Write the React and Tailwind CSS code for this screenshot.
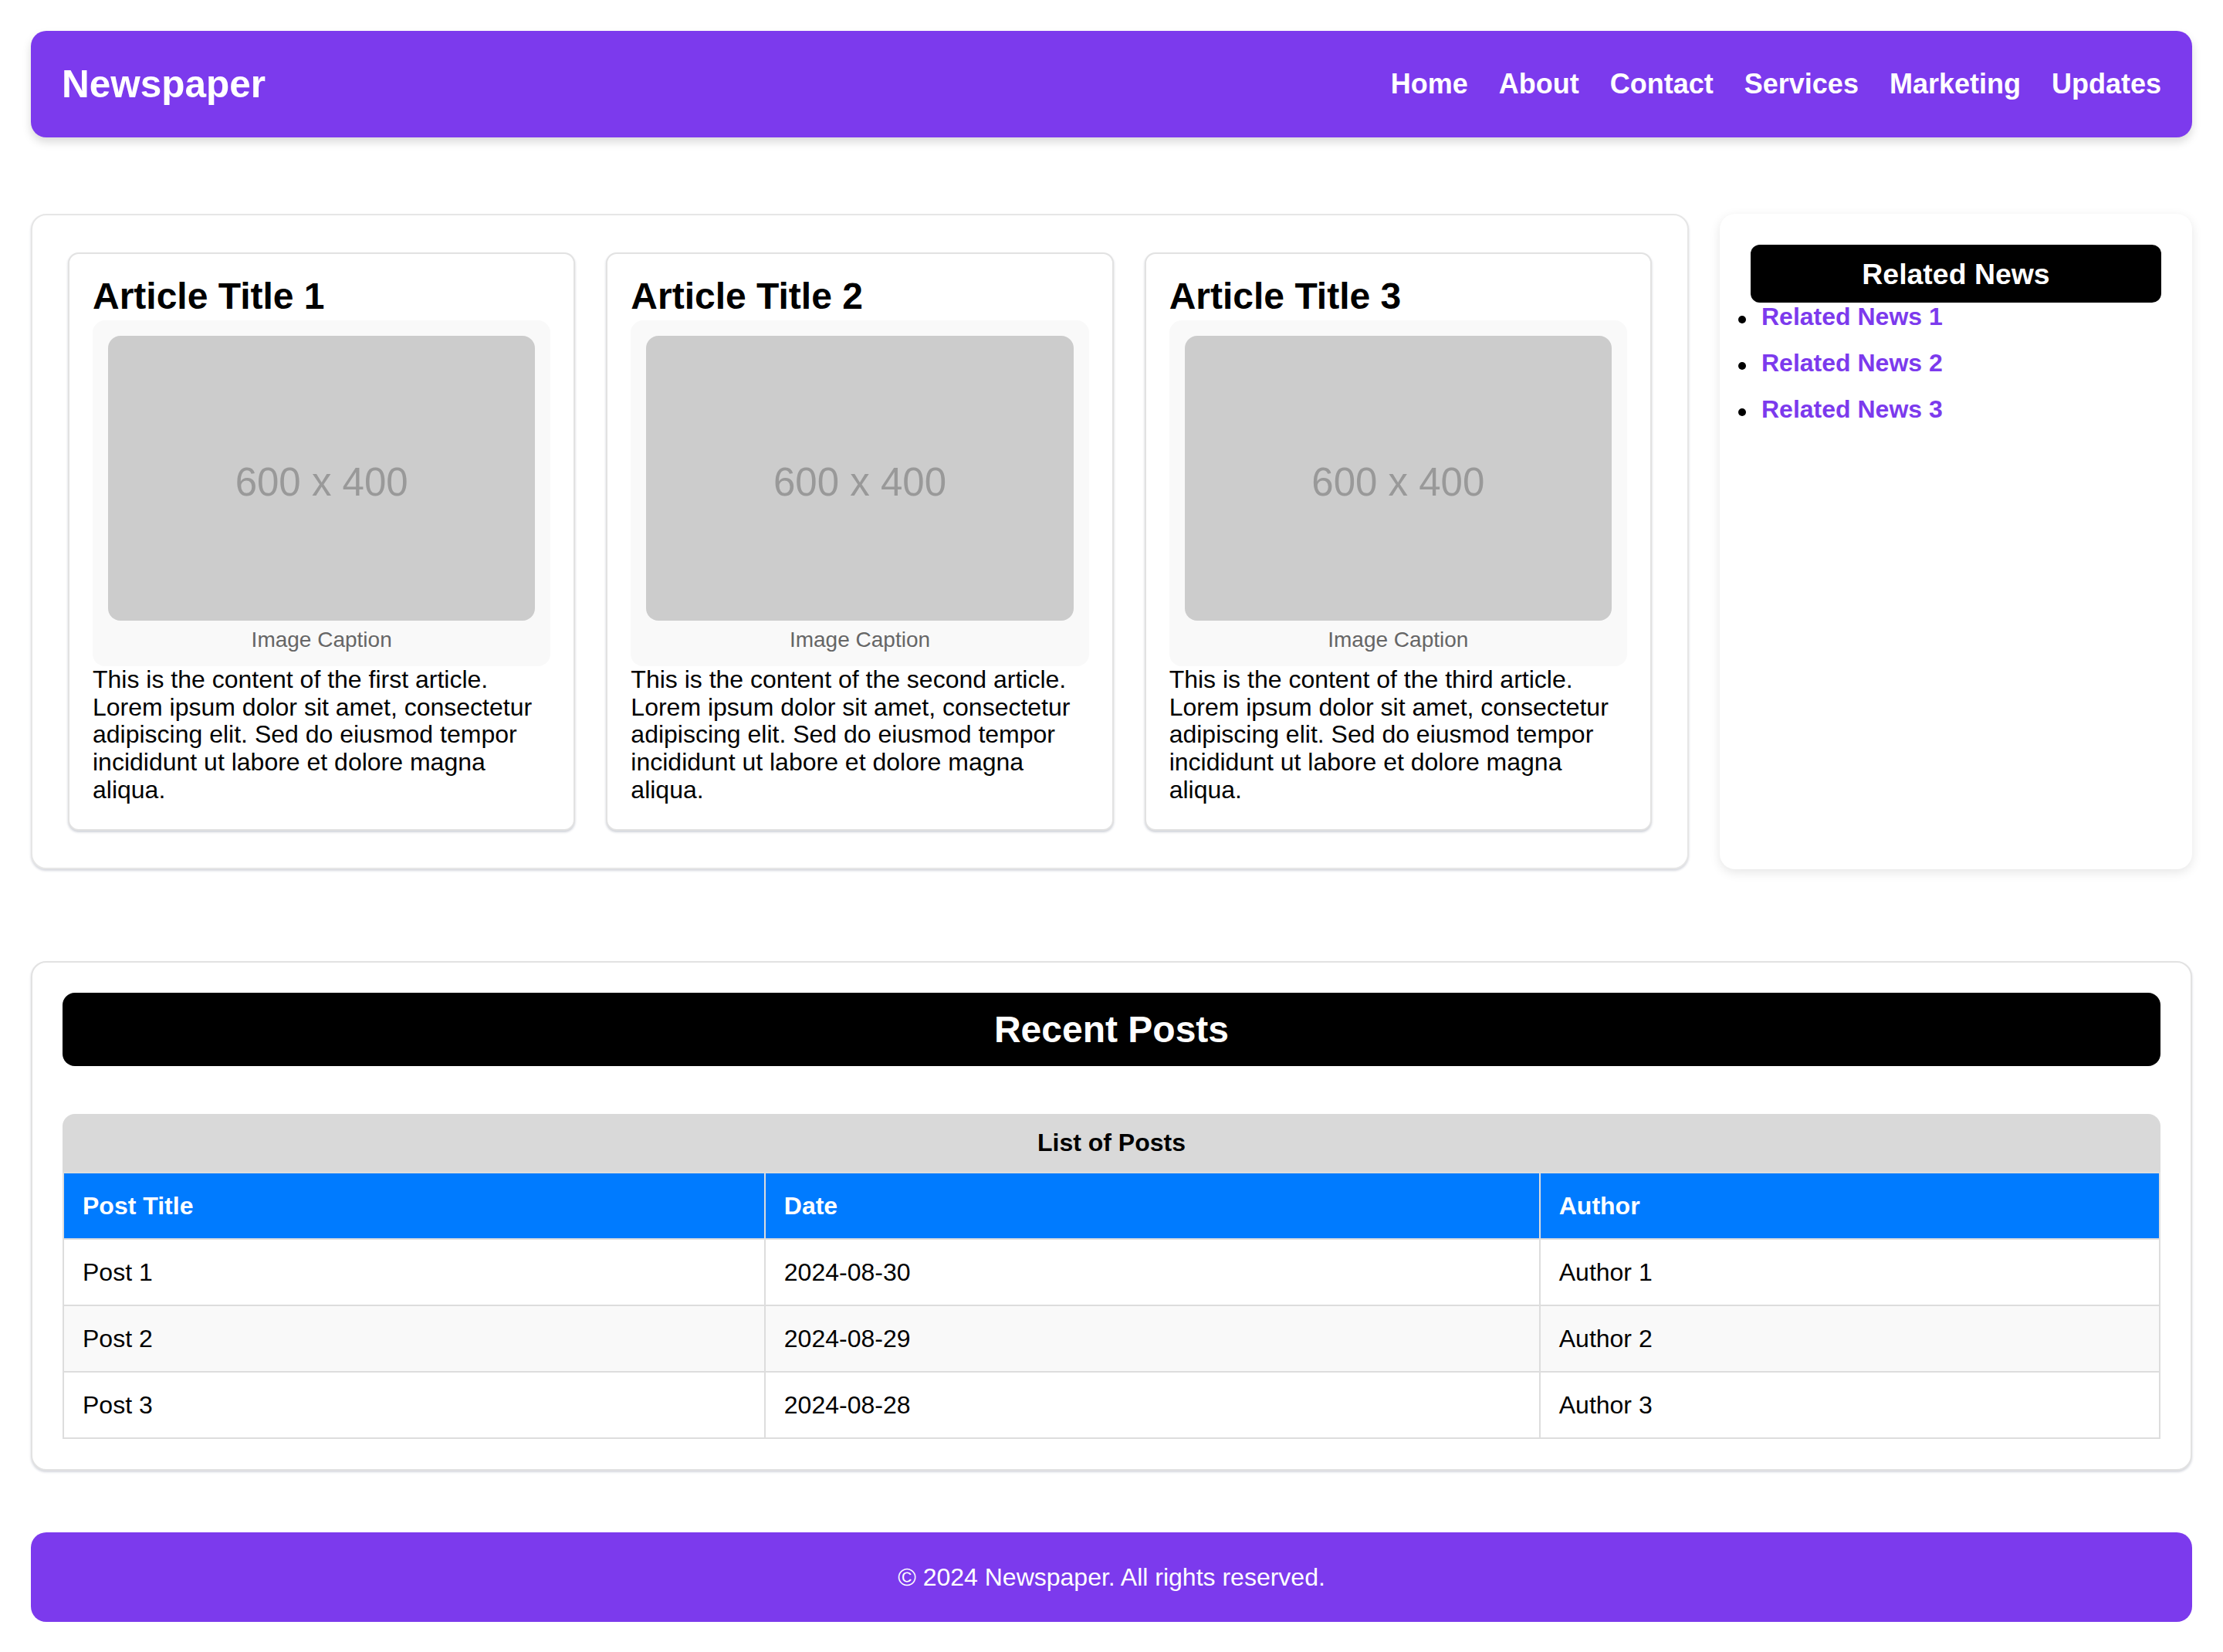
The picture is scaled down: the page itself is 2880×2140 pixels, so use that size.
import React from 'react';

const navLinks = ['Home', 'About', 'Contact', 'Services', 'Marketing', 'Updates'];

const articles = [
    { title: 'Article Title 1', which: 'first' },
    { title: 'Article Title 2', which: 'second' },
    { title: 'Article Title 3', which: 'third' },
];

const relatedNews = ['Related News 1', 'Related News 2', 'Related News 3'];

const posts = [
    { title: 'Post 1', date: '2024-08-30', author: 'Author 1' },
    { title: 'Post 2', date: '2024-08-29', author: 'Author 2' },
    { title: 'Post 3', date: '2024-08-28', author: 'Author 3' },
];

function ArticleCard({ title, which }) {
    return (
        <article className="rounded-[14px] border-2 border-[#e2e2e2] bg-white px-[30px] pt-[28px] pb-[32px] shadow-[0_2px_3px_rgba(60,70,100,0.25)]">
            <h2 className="mb-[4px] text-[48px] font-bold leading-[54px]">{title}</h2>
            <figure className="rounded-[16px] bg-[#f9f9f9] px-[20px] pt-[20px] pb-[18px]">
                <div className="flex aspect-[3/2] w-full items-center justify-center rounded-[16px] bg-[#cccccc] pt-[12px] text-[51px] text-[#999999]">
                    600 x 400
                </div>
                <figcaption className="mt-[9px] text-center text-[28px] leading-[32px] text-[#666666]">
                    Image Caption
                </figcaption>
            </figure>
            <p className="text-[32px] leading-[35.8px]">
                This is the content of the {which} article. Lorem ipsum dolor sit amet, consectetur adipiscing elit. Sed do eiusmod tempor incididunt ut labore et dolore magna aliqua.
            </p>
        </article>
    );
}

export default function App() {
    return (
        <div className="min-h-screen bg-white p-[40px] font-['Liberation_Sans',Arial,sans-serif] text-black">
            {/* Header */}
            <header className="flex items-center justify-between rounded-[20px] bg-[#7c3aed] px-[40px] py-[40px] text-white shadow-[0_6px_12px_rgba(0,0,0,0.15)]">
                <h1 className="text-[49.5px] font-bold leading-[58px]">Newspaper</h1>
                <nav>
                    <ul className="flex gap-[40px]">
                        {navLinks.map(link => (
                            <li key={link}>
                                <a href="#" className="text-[36px] font-bold leading-[40px] text-white">{link}</a>
                            </li>
                        ))}
                    </ul>
                </nav>
            </header>

            {/* Articles + sidebar */}
            <main className="mt-[99px] flex gap-[40px]">
                <section className="flex-1 rounded-[20px] border-2 border-[#e6e6e6] bg-white px-[46px] py-[48px] shadow-[0_2px_3px_rgba(60,70,100,0.22)]">
                    <div className="grid grid-cols-3 gap-[40px]">
                        {articles.map(a => (
                            <ArticleCard key={a.title} title={a.title} which={a.which} />
                        ))}
                    </div>
                </section>

                <aside className="w-[612px] shrink-0 rounded-[20px] bg-white p-[40px] shadow-[0_4px_14px_rgba(0,0,0,0.1)]">
                    <h3 className="flex h-[75px] items-center justify-center rounded-[12px] bg-black text-[37.44px] font-bold leading-[42px] text-white">
                        Related News
                    </h3>
                    <ul className="pl-[14px]">
                        {relatedNews.map(item => (
                            <li key={item} className="relative mb-[24px] text-[32px] leading-[36px]">
                                <span className="absolute left-[-30px] top-[17px] h-[10px] w-[10px] rounded-full bg-black" />
                                <a href="#" className="font-bold text-[#7c3aed]">{item}</a>
                            </li>
                        ))}
                    </ul>
                </aside>
            </main>

            {/* Recent posts */}
            <section className="mt-[119px] rounded-[20px] border-2 border-[#e2e2e2] bg-white p-[39px] shadow-[0_2px_3px_rgba(60,70,100,0.22)]">
                <h2 className="rounded-[16px] bg-black py-[20px] text-center text-[48px] font-bold leading-[55px] text-white">
                    Recent Posts
                </h2>
                <table className="mt-[62px] w-full border-collapse text-[32px] leading-[36px]">
                    <caption className="rounded-t-[16px] bg-[#d9d9d9] py-[20px] text-center font-bold leading-[35px]">
                        List of Posts
                    </caption>
                    <thead>
                        <tr className="bg-[#007bff] text-white">
                            <th className="border-2 border-[#dddddd] p-[24px] text-left font-bold">Post Title</th>
                            <th className="border-2 border-[#dddddd] p-[24px] text-left font-bold">Date</th>
                            <th className="border-2 border-[#dddddd] p-[24px] text-left font-bold">Author</th>
                        </tr>
                    </thead>
                    <tbody>
                        {posts.map((post, i) => (
                            <tr key={post.title} className={i % 2 === 1 ? 'bg-[#f9f9f9]' : 'bg-white'}>
                                <td className="border-2 border-[#dddddd] p-[24px]">{post.title}</td>
                                <td className="border-2 border-[#dddddd] p-[24px]">{post.date}</td>
                                <td className="border-2 border-[#dddddd] p-[24px]">{post.author}</td>
                            </tr>
                        ))}
                    </tbody>
                </table>
            </section>

            {/* Footer */}
            <footer className="mt-[80px] rounded-[20px] bg-[#7c3aed] py-[40px] text-center text-[32px] leading-[36px] text-white">
                <p>&copy; 2024 Newspaper. All rights reserved.</p>
            </footer>
        </div>
    );
}
